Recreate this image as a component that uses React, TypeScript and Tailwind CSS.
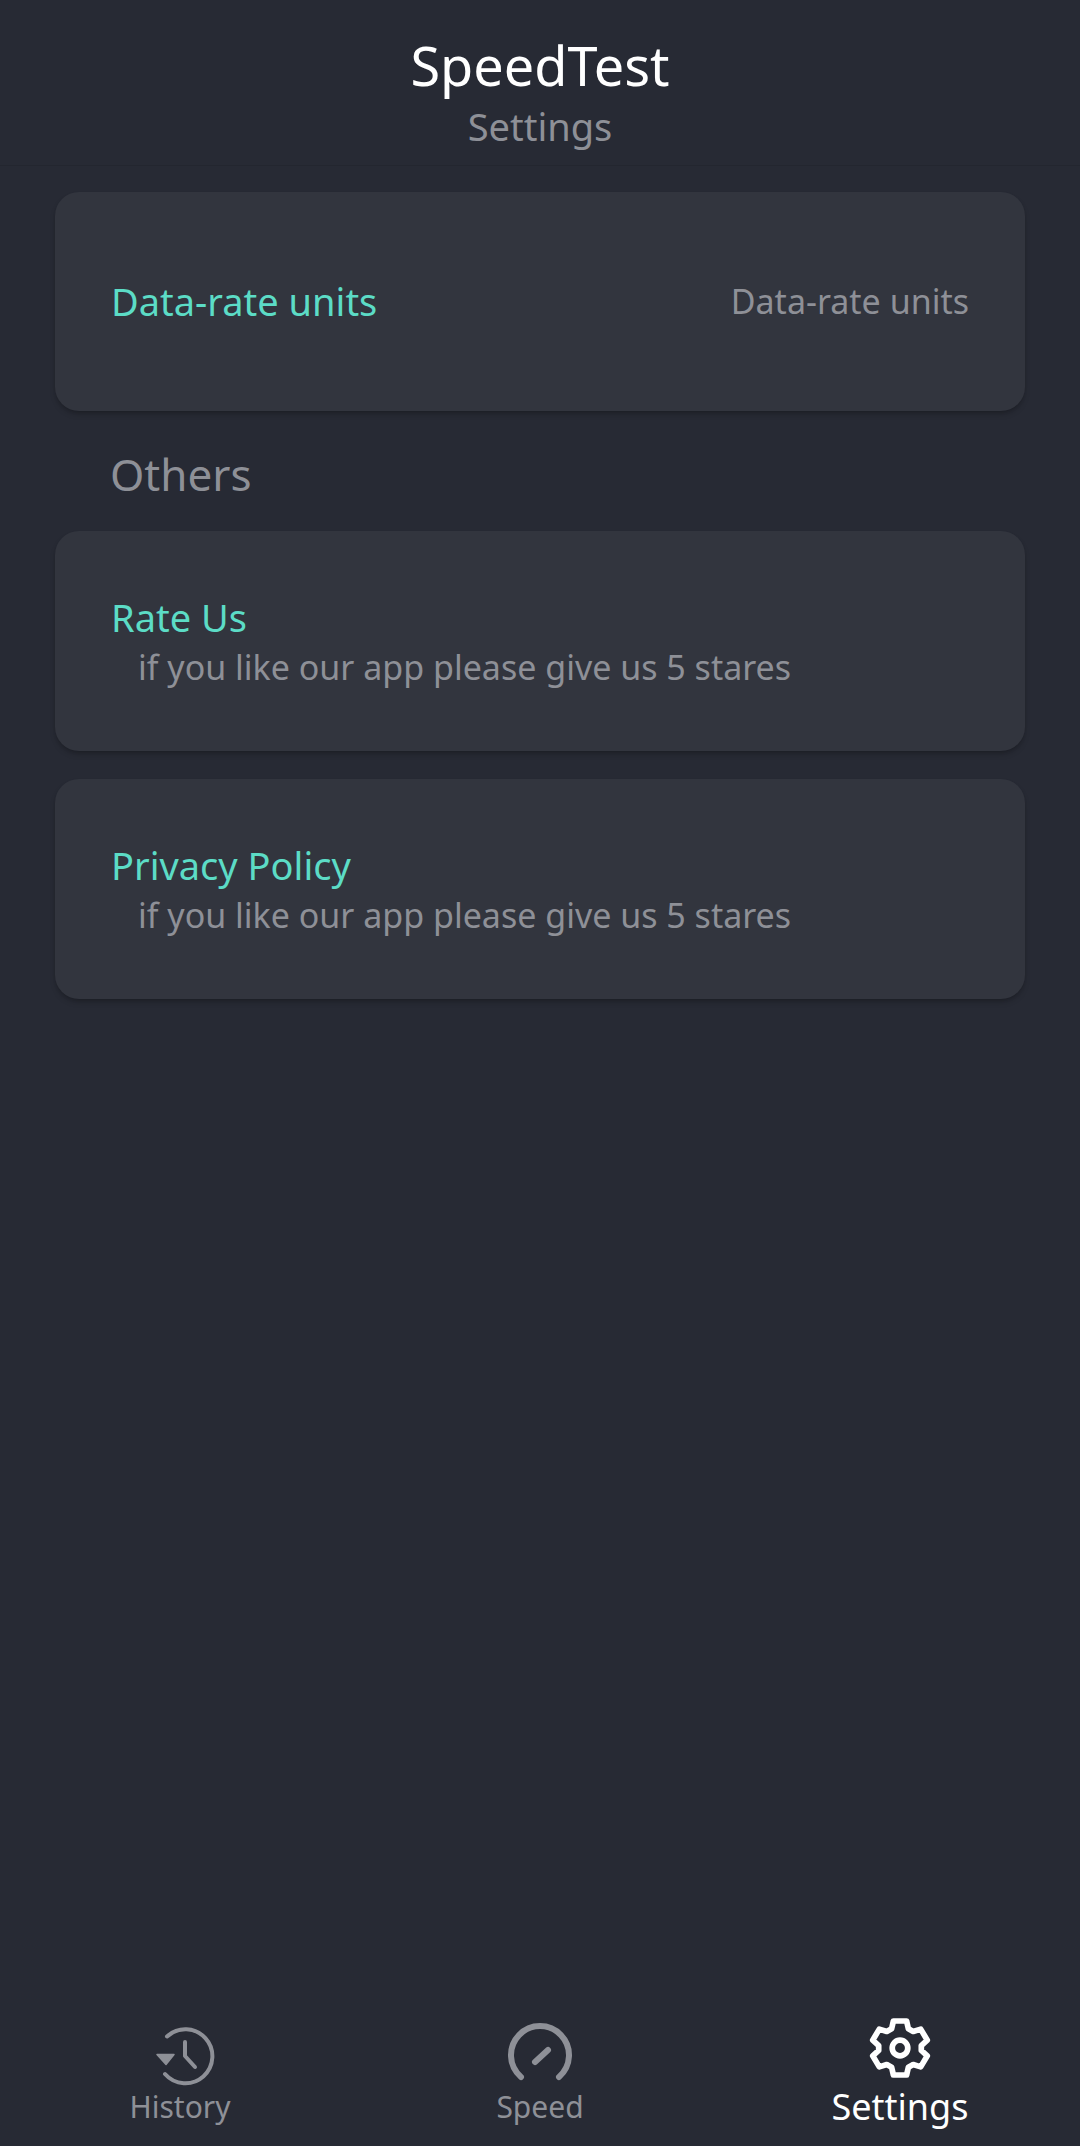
import React from "react";

function HistoryIcon() {
  return (
    <svg width="72" height="64" viewBox="0 0 72 64" fill="none" stroke="#8e9097" strokeWidth="4" strokeLinecap="round" strokeLinejoin="round">
      <path d="M23 14.5 A27 27 0 1 1 21 52" />
      <path d="M13 32.5 h17 l-8 10 z" fill="#8e9097" strokeWidth="1.5" />
      <path d="M41 20 v14 l10 11" />
    </svg>
  );
}

function SpeedIcon() {
  return (
    <svg width="72" height="64" viewBox="0 0 72 64" fill="none" stroke="#8e9097" strokeWidth="6" strokeLinecap="round">
      <path d="M17 55 A29 29 0 1 1 55 55" />
      <path d="M31 40 L44 28" />
    </svg>
  );
}

function GearIcon() {
  return (
    <svg width="72" height="72" viewBox="0 0 24 24" fill="none" stroke="#ffffff" strokeWidth="1.9" strokeLinejoin="round">
      <path d="M9.8 3h4.4l.6 2.6 1.6.9 2.5-.8 2.2 3.7-2 1.8v1.6l2 1.8-2.2 3.7-2.5-.8-1.6.9-.6 2.6H9.8l-.6-2.6-1.6-.9-2.5.8-2.2-3.7 2-1.8v-1.6l-2-1.8 2.2-3.7 2.5.8 1.6-.9z" />
      <circle cx="12" cy="12" r="2.6" />
    </svg>
  );
}

function Card({ title, sub }: { title: string; sub: string }) {
  return (
    <div className="h-[220px] rounded-[24px] bg-[#32353e] shadow-md shadow-black/20 px-[56px] pt-[60px]">
      <div className="text-[38px] leading-[52px] text-[#5cdcc6]">{title}</div>
      <div className="pl-[27px] text-[34px] leading-[48px] text-[#8e9097]">{sub}</div>
    </div>
  );
}

export default function App() {
  return (
    <div className="h-[2146px] w-[1080px] flex flex-col bg-[#272a34] font-['Noto_Sans','Open_Sans',sans-serif]">
      <header className="h-[166px] shrink-0 border-b border-[#23262f] flex flex-col items-center pt-[31px]">
        <h1 className="text-[54px] leading-[68px] text-white">SpeedTest</h1>
        <p className="text-[38px] leading-[54px] text-[#8e9097]">Settings</p>
      </header>

      <main className="flex-1 px-[55px] pt-[26px]">
        <div className="h-[219px] rounded-[24px] bg-[#32353e] shadow-md shadow-black/20 px-[56px] flex items-center justify-between">
          <span className="text-[38px] text-[#5cdcc6]">Data-rate units</span>
          <span className="text-[34px] text-[#8e9097]">Data-rate units</span>
        </div>
        <h2 className="pl-[55px] pt-[33px] pb-[27px] text-[44px] leading-[60px] text-[#8e9097]">Others</h2>
        <div className="flex flex-col gap-[28px]">
          <Card title="Rate Us" sub="if you like our app please give us 5 stares" />
          <Card title="Privacy Policy" sub="if you like our app please give us 5 stares" />
        </div>
      </main>

      <nav className="h-[146px] shrink-0 grid grid-cols-3 text-[30px]">
        <div className="flex flex-col items-center pt-[22px] text-[#8e9097]">
          <HistoryIcon />
          <span className="leading-[42px]">History</span>
        </div>
        <div className="flex flex-col items-center pt-[22px] text-[#8e9097]">
          <SpeedIcon />
          <span className="leading-[42px]">Speed</span>
        </div>
        <div className="flex flex-col items-center pt-[12px] text-white">
          <GearIcon />
          <span className="text-[36px] leading-[46px]">Settings</span>
        </div>
      </nav>
    </div>
  );
}
